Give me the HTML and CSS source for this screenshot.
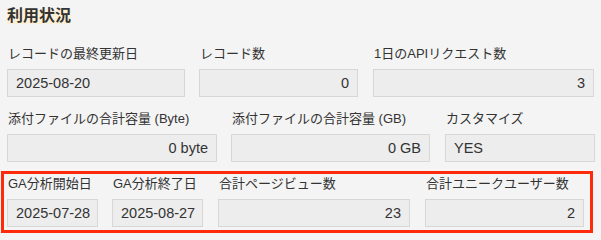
FILE: index.html
```html
<!DOCTYPE html>
<html lang="ja">
<head>
<meta charset="utf-8">
<title>利用状況</title>
<link rel="stylesheet" href="styles.css">
</head>
<body>
<h2 class="title"><span class="title-mark">利用状況</span></h2>

<div class="row">
  <div class="field f-updated">
    <div class="label">レコードの最終更新日</div>
    <div class="value">2025-08-20</div>
  </div>
  <div class="field f-records gap15">
    <div class="label">レコード数</div>
    <div class="value num">0</div>
  </div>
  <div class="field f-api">
    <div class="label">1日のAPIリクエスト数</div>
    <div class="value num">3</div>
  </div>
</div>

<div class="row">
  <div class="field f-byte">
    <div class="label">添付ファイルの合計容量 (Byte)</div>
    <div class="value num">0 byte</div>
  </div>
  <div class="field f-gb gap15">
    <div class="label">添付ファイルの合計容量 (GB)</div>
    <div class="value num">0 GB</div>
  </div>
  <div class="field f-custom">
    <div class="label">カスタマイズ</div>
    <div class="value">YES</div>
  </div>
</div>

<div class="group">
  <div class="row">
    <div class="field f-date">
      <div class="label">GA分析開始日</div>
      <div class="value">2025-07-28</div>
    </div>
    <div class="field f-date gap15">
      <div class="label">GA分析終了日</div>
      <div class="value">2025-08-27</div>
    </div>
    <div class="field f-pv gap15">
      <div class="label">合計ページビュー数</div>
      <div class="value num">23</div>
    </div>
    <div class="field f-uu">
      <div class="label">合計ユニークユーザー数</div>
      <div class="value num">2</div>
    </div>
  </div>
</div>
</body>
</html>
```

FILE: styles.css
```css
html, body {
  background: #f4f4f4;
}
body {
  margin: 0;
  padding: 0 7px;
  font-family: "Liberation Sans", "Noto Sans CJK JP", sans-serif;
  color: #333333;
}
.title {
  margin: 0 0 20px;
  padding-top: 10px;
  height: 14px;
  font-size: 16px;
  font-weight: bold;
  line-height: 14px;
}
.title-mark {
  display: inline-block;
  height: 14px;
  line-height: 12px;
  background: #fcf0d7;
  vertical-align: top;
}
.row {
  display: flex;
  align-items: flex-start;
}
.field {
  flex: none;
  margin: 0 14px 12px 0;
}
.field.gap15 {
  margin-right: 15px;
}
.field:last-child {
  margin-right: 0;
}
.label {
  height: 20px;
  margin-bottom: 5px;
  font-size: 13px;
  line-height: 20px;
  white-space: nowrap;
  padding-left: 1px;
}
.value {
  box-sizing: border-box;
  height: 28px;
  padding: 0 8px;
  background: #ededed;
  border: 1px solid #d7d7d7;
  font-size: 14.5px;
  line-height: 26px;
  white-space: nowrap;
}
.value.num {
  text-align: right;
}
.f-updated { width: 178px; }
.f-records { width: 159px; }
.f-api { width: 221px; }
.f-byte { width: 210px; }
.f-gb { width: 199px; }
.f-custom { width: 150px; }
.f-date { width: 91px; }
.f-pv { width: 192px; }
.f-uu { width: 159px; }

.group {
  width: 583px;
  margin: -3px 0 0 -6px;
  padding-left: 3px;
  border: 3px solid #ff2a0a;
}
.group .field {
  margin-bottom: 3px;
}
```
